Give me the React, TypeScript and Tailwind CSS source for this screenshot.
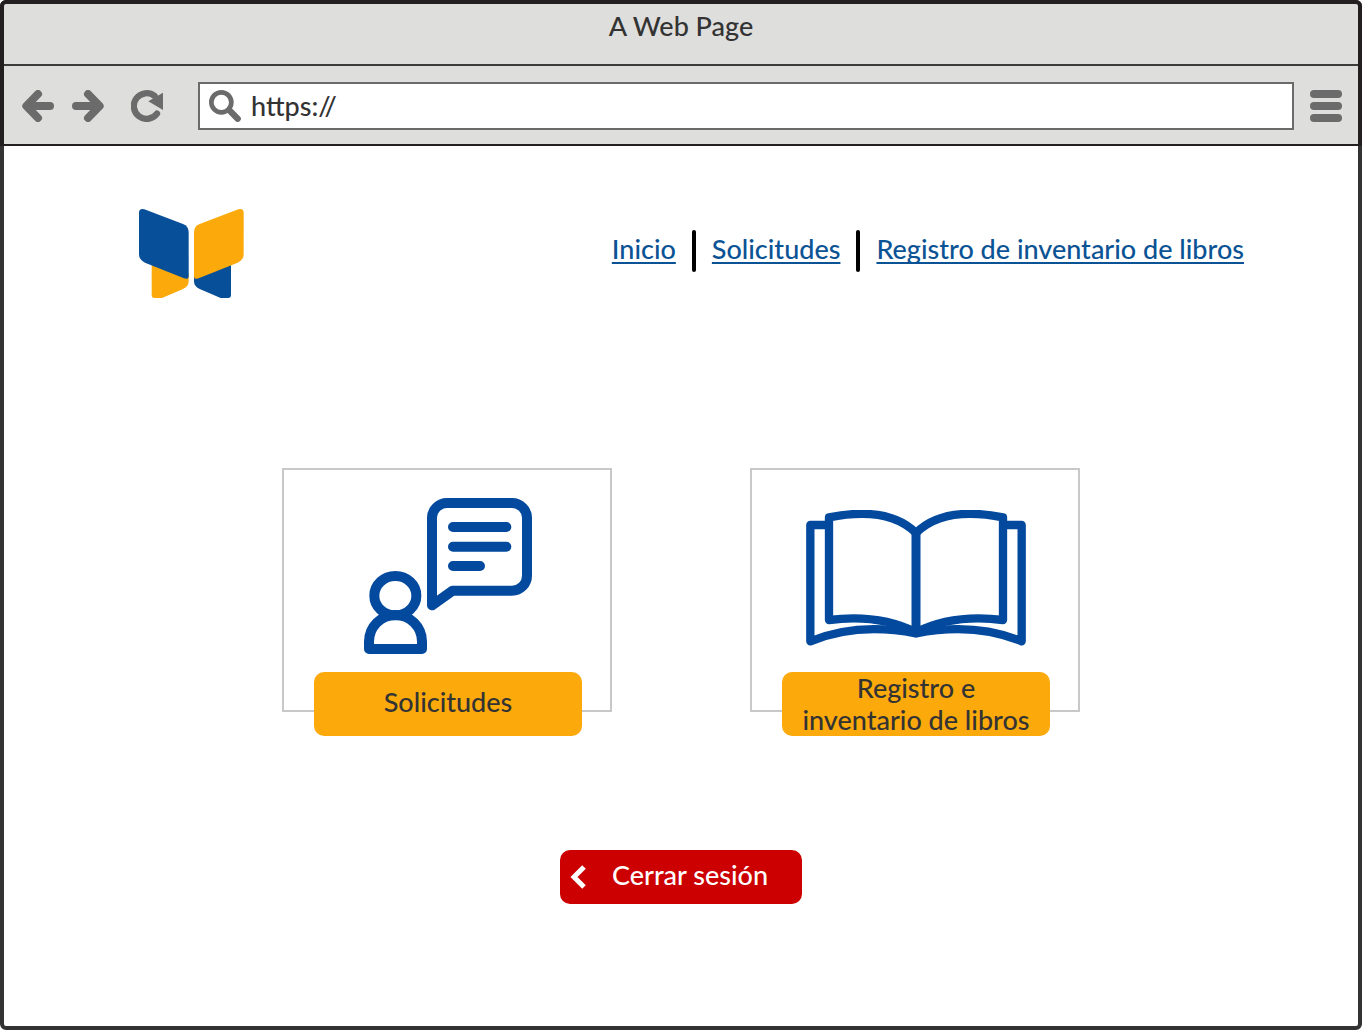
import type { ReactNode } from 'react';

function BackArrow({ className = '' }: { className?: string }) {
  return (
    <svg viewBox="66 270 96 96" className={`size-8 ${className}`} fill="none" stroke="currentColor" strokeWidth="24" strokeLinecap="round" strokeLinejoin="round" aria-hidden="true">
      <path d="M114 282 L79 318 L114 354 M82 318 H150" />
    </svg>
  );
}

function ReloadIcon() {
  return (
    <svg viewBox="393 270 96 96" className="size-8" aria-hidden="true">
      <path d="M471 341 A38.5 38.5 0 1 1 464 288" fill="none" stroke="currentColor" strokeWidth="19" strokeLinecap="round" />
      <path d="M489 278 V330 L445 304 Z" fill="currentColor" />
    </svg>
  );
}

function SearchIcon() {
  return (
    <svg viewBox="627 270 96 96" className="size-8 shrink-0 text-[#6b6b6b]" fill="none" stroke="currentColor" aria-hidden="true">
      <circle cx="664" cy="307" r="30" strokeWidth="14" />
      <path d="M688 331 L713 356" strokeWidth="19" strokeLinecap="round" />
    </svg>
  );
}

function MenuIcon() {
  return (
    <svg viewBox="0 0 32 32" className="size-8" fill="currentColor" aria-hidden="true">
      <rect width="32" height="8" rx="4" />
      <rect y="12" width="32" height="8" rx="4" />
      <rect y="24" width="32" height="8" rx="4" />
    </svg>
  );
}

const coverPath = 'M28 39 Q28 24 44 28 L160 72 Q177 79 177 96 V228 Q177 240 163 235 L46 188 Q28 180 28 163 Z';
const pagePath = 'M66 190 V285 Q66 294 75 294 H97 L160 267 Q177 259 177 244 V220 Z';

function Logo() {
  return (
    <svg viewBox="28 27 315 267" className="h-[89px] w-[105px] shrink-0" role="img" aria-label="Logo">
      <path d={pagePath} fill="#fcaa0b" />
      <path d={coverPath} fill="#074f98" />
      <g transform="translate(370 0) scale(-1 1)">
        <path d={pagePath} fill="#074f98" />
        <path d={coverPath} fill="#fcaa0b" />
      </g>
    </svg>
  );
}

function RequestsIcon() {
  return (
    <svg viewBox="42 39 504 468" className="h-[156px] w-[168px]" fill="none" stroke="#034a9e" strokeWidth="30" strokeLinecap="round" strokeLinejoin="round" aria-hidden="true">
      <path d="M246 361 V98 A45 45 0 0 1 291 54 H486 A45 45 0 0 1 531 98 V272 A45 45 0 0 1 486 317 H308 Z" />
      <path d="M309 126 H469 M309 185 H469 M309 243 H390" />
      <ellipse cx="136" cy="332" rx="63" ry="59" />
      <path d="M57 492 V470 A79.5 80 0 0 1 216 470 V492 Z" />
    </svg>
  );
}

function BookHalf() {
  return (
    <>
      <path d="M363 99 C300 36 204 32 102 52 V360 C200 348 290 360 363 397" />
      <path d="M92 75 H46 V424 C140 385 250 378 363 400" />
    </>
  );
}

function BookIcon() {
  return (
    <svg viewBox="33 30 660 408" className="h-[136px] w-[220px]" fill="none" stroke="#034a9e" strokeWidth="25" strokeLinejoin="round" aria-hidden="true">
      <BookHalf />
      <g transform="translate(726 0) scale(-1 1)">
        <BookHalf />
      </g>
      <path d="M363 94 V400" strokeWidth="27" />
      <path d="M350 400 V408 L363 413 L376 408 V400 Z" fill="#034a9e" stroke="none" />
    </svg>
  );
}

function BrowserBar() {
  return (
    <header className="-mx-1 -mt-1 rounded-t-md border-4 border-b-2 border-[#231f20] bg-[#dededc]">
      <div className="flex h-[62px] justify-center border-b-2 border-[#3c3b3b] pt-1.5">
        <span>A Web Page</span>
      </div>
      <div className="flex items-center pt-4 pr-4 pb-3.5 pl-[18px] text-[#6b6b6b]">
        <button type="button" aria-label="Atrás" className="mr-[18px]"><BackArrow /></button>
        <button type="button" aria-label="Adelante" className="mr-[27px]"><BackArrow className="-scale-x-100" /></button>
        <button type="button" aria-label="Recargar" className="mr-[35px]"><ReloadIcon /></button>
        <label className="mr-4 flex h-12 min-w-0 flex-1 items-center gap-2.5 border-2 border-[#6b6b6b] bg-white pl-[9px]">
          <SearchIcon />
          <input type="text" aria-label="Dirección" defaultValue="https://" className="min-w-0 flex-1 bg-transparent text-[#333] outline-none" />
        </label>
        <button type="button" aria-label="Menú"><MenuIcon /></button>
      </div>
    </header>
  );
}

function NavLink({ children }: { children: ReactNode }) {
  return (
    <a href="#" className="pb-1 text-[#0b5394] underline decoration-2 underline-offset-3 [text-decoration-skip-ink:none]">
      {children}
    </a>
  );
}

function Divider() {
  return <span className="h-[42px] w-1 rounded-full bg-black" />;
}

function Card({ icon, label }: { icon: ReactNode; label: string }) {
  return (
    <section className="flex h-[244px] w-[330px] flex-col items-center border-2 border-[#c8c8c8] pl-0.5">
      <div className="flex flex-1 items-center">{icon}</div>
      <button type="button" className="-mb-[26px] h-16 w-[268px] shrink-0 rounded-[10px] bg-[#fcaa0b] px-4 pb-1 text-[#333]">
        {label}
      </button>
    </section>
  );
}

export default function App() {
  return (
    <div className="flex min-h-screen flex-col rounded-md border-4 border-[#333] bg-white font-['Lato',sans-serif] text-[27px] leading-8 font-medium text-[#333]">
      <BrowserBar />
      <div className="flex items-center justify-between pt-[63px] pr-[114px] pl-[135px]">
        <Logo />
        <nav className="flex items-center gap-4 pb-1.5">
          <NavLink>Inicio</NavLink>
          <Divider />
          <NavLink>Solicitudes</NavLink>
          <Divider />
          <NavLink>Registro de inventario de libros</NavLink>
        </nav>
      </div>
      <main className="flex flex-col items-center pb-[122px]">
        <div className="mt-[170px] flex flex-wrap justify-center gap-[138px]">
          <Card icon={<div className="pt-2.5"><RequestsIcon /></div>} label="Solicitudes" />
          <Card icon={<div className="pt-3.5"><BookIcon /></div>} label="Registro e inventario de libros" />
        </div>
        <button type="button" className="mt-[138px] flex h-[54px] w-[242px] items-center rounded-[10px] bg-[#cc0000] pr-2 pl-2.5 text-white">
          <svg viewBox="0 0 16 24" className="h-6 w-4 shrink-0" fill="none" stroke="currentColor" strokeWidth="5" aria-hidden="true">
            <path d="M14 2 L4 12 L14 22" />
          </svg>
          <span className="flex-1 pb-1">Cerrar sesión</span>
        </button>
      </main>
    </div>
  );
}
